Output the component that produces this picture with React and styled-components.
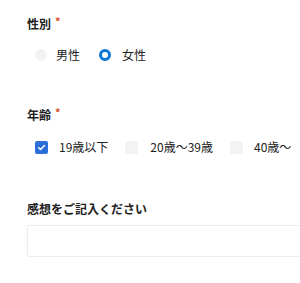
import React, { useState } from "react";
import styled, { createGlobalStyle } from "styled-components";

const GlobalStyle = createGlobalStyle`
  body {
    margin: 0;
    background: #fff;
    font-family: "Noto Sans CJK JP", "Noto Sans", sans-serif;
    color: #222;
  }
`;

const Form = styled.form`
  padding: 14px 0 0 27px;
  width: 300px;
  box-sizing: border-box;
  overflow: hidden;
`;

const Field = styled.fieldset`
  border: 0;
  margin: 0 0 ${(p) => p.$gap || 0}px;
  padding: 0;
`;

const Label = styled.div`
  font-size: 12px;
  font-weight: 700;
  line-height: 20px;
  display: flex;
  align-items: flex-start;
  gap: 4px;
`;

const Required = styled.span`
  color: #d9502c;
  font-size: 11px;
  font-weight: 700;
  line-height: 14px;
`;

const Options = styled.div`
  display: flex;
  align-items: center;
  gap: ${(p) => p.$gap}px;
  padding: 0 0 0 8px;
  margin-top: ${(p) => p.$top}px;
`;

const Option = styled.label`
  display: flex;
  align-items: center;
  gap: ${(p) => p.$gap}px;
  font-size: 12px;
  line-height: 18px;
  cursor: pointer;
`;

const Radio = styled.span`
  width: 12px;
  height: 12px;
  border-radius: 50%;
  box-sizing: border-box;
  background: ${(p) => (p.$on ? "#fff" : "#f2f2f2")};
  border: ${(p) => (p.$on ? "3.5px solid #0b76d6" : "none")};
`;

const Box = styled.span`
  width: 13px;
  height: 13px;
  border-radius: 2px;
  background: ${(p) => (p.$on ? "#2c6fd8" : "#f3f3f3")};
  display: flex;
  align-items: center;
  justify-content: center;
`;

const TextArea = styled.textarea`
  display: block;
  width: 300px;
  height: 32px;
  margin-top: 6px;
  border: 1px solid #ececec;
  border-radius: 2px;
  resize: none;
  box-sizing: border-box;
  font-family: inherit;
  outline: none;
`;

const Check = () => (
  <svg width="9" height="9" viewBox="0 0 10 10">
    <path d="M1.8 5.2 L4 7.3 L8.3 2.8" fill="none" stroke="#fff" strokeWidth="1.6" strokeLinecap="round" strokeLinejoin="round" />
  </svg>
);

export default function App() {
  const [sex, setSex] = useState("female");
  const [ages, setAges] = useState(["u19"]);
  const toggle = (k) =>
    setAges((a) => (a.includes(k) ? a.filter((x) => x !== k) : [...a, k]));

  return (
    <>
      <GlobalStyle />
      <Form>
        <Field $gap={41}>
          <Label>
            性別<Required>*</Required>
          </Label>
          <Options $gap={19} $top={12}>
            <Option $gap={9} onClick={() => setSex("male")}>
              <Radio $on={sex === "male"} />
              男性
            </Option>
            <Option $gap={11} onClick={() => setSex("female")}>
              <Radio $on={sex === "female"} />
              女性
            </Option>
          </Options>
        </Field>
        <Field $gap={43}>
          <Label>
            年齢<Required>*</Required>
          </Label>
          <Options $gap={17} $top={13}>
            <Option $gap={11} onClick={() => toggle("u19")}>
              <Box $on={ages.includes("u19")}>{ages.includes("u19") && <Check />}</Box>
              19歳以下
            </Option>
            <Option $gap={12} onClick={() => toggle("20")}>
              <Box $on={ages.includes("20")}>{ages.includes("20") && <Check />}</Box>
              20歳〜39歳
            </Option>
            <Option $gap={11} onClick={() => toggle("40")}>
              <Box $on={ages.includes("40")}>{ages.includes("40") && <Check />}</Box>
              40歳〜
            </Option>
          </Options>
        </Field>
        <Field>
          <Label>感想をご記入ください</Label>
          <TextArea />
        </Field>
      </Form>
    </>
  );
}
